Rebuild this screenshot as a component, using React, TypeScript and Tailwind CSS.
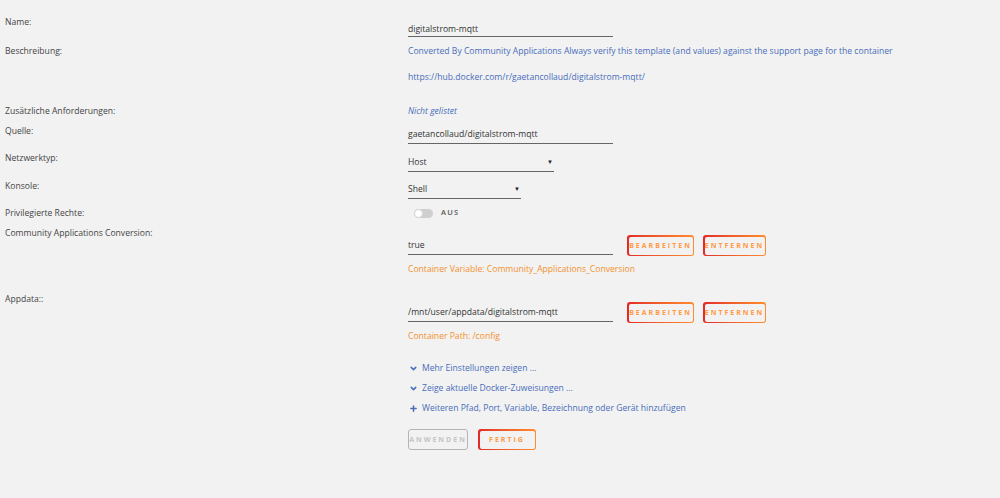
import { ChevronDown, Plus } from 'lucide-react';
import type { ReactNode } from 'react';

// Gradient-bordered action button
const ActionButton = ({ label, width, disabled }: { label: string; width: string; disabled?: boolean }) =>
  disabled ? (
    <div className={`${width} h-[21px] rounded-[3px] border-[1.5px] border-[#b5b5b5] flex items-center justify-center`}>
      <span className="text-[7px] font-bold tracking-[2px] text-[#c4c4c4] leading-none">{label}</span>
    </div>
  ) : (
    <div className={`${width} h-[21px] rounded-[3px] bg-gradient-to-r from-[#e22828] to-[#ff8c2f] p-[1.5px]`}>
      <div className="w-full h-full rounded-[2px] bg-[#f2f2f2] flex items-center justify-center">
        <span className="text-[7px] font-bold tracking-[2px] text-[#ff9a45] leading-none">{label}</span>
      </div>
    </div>
  );

const Field = ({ children, width }: { children: ReactNode; width: string }) => (
  <div className={`${width} leading-[12px] pb-[3px] border-b border-[#666] text-[#333] flex justify-between`}>
    {children}
  </div>
);

const Row = ({ label, height, children }: { label: string; height?: string; children?: ReactNode }) => (
  <div className={`flex ${height ?? ''}`}>
    <div className="w-[408px] pl-[5px] leading-[12px] text-[#444] shrink-0">{label}</div>
    <div className="flex-1">{children}</div>
  </div>
);

const Arrow = () => <span className="text-[6px] text-[#222] pr-[1px]">▼</span>;

export default function App() {
  return (
    <div className="min-h-screen bg-[#f2f2f2] text-[8.6px] pt-[16px]" style={{ fontFamily: '"Open Sans", sans-serif' }}>
      <Row label="Name:" height="h-[29px]">
        <div className="pt-[9px]">
          <Field width="w-[205px]">
            <span className="leading-[8px]">digitalstrom-mqtt</span>
          </Field>
        </div>
      </Row>

      <Row label="Beschreibung:" height="h-[60px]">
        <div className="leading-[12px] text-[#486dba]">
          Converted By Community Applications Always verify this template (and values) against the support page for the container
        </div>
        <div className="leading-[12px] text-[#486dba] mt-[14px]">https://hub.docker.com/r/gaetancollaud/digitalstrom-mqtt/</div>
      </Row>

      <Row label="Zusätzliche Anforderungen:" height="h-[20px]">
        <div className="leading-[12px] text-[#486dba] italic">Nicht gelistet</div>
      </Row>

      <Row label="Quelle:" height="h-[27px]">
        <div className="pt-[3px]">
          <Field width="w-[205px]">gaetancollaud/digitalstrom-mqtt</Field>
        </div>
      </Row>

      <Row label="Netzwerktyp:" height="h-[28px]">
        <div className="pt-[4px]">
          <Field width="w-[146px]">
            <span>Host</span>
            <Arrow />
          </Field>
        </div>
      </Row>

      <Row label="Konsole:" height="h-[27px]">
        <div className="pt-[3px]">
          <Field width="w-[113px]">
            <span>Shell</span>
            <Arrow />
          </Field>
        </div>
      </Row>

      <Row label="Privilegierte Rechte:" height="h-[20px]">
        <div className="flex items-center h-[12px] pl-[6px] gap-[8px]">
          <div className="relative w-[19px] h-[9px] rounded-full bg-[#cfcfcf]">
            <div className="absolute left-0 top-0 w-[9px] h-[9px] rounded-full bg-white border border-[#d6d6d6]" />
          </div>
          <span className="text-[7.5px] tracking-[1.2px] text-[#555] font-semibold">AUS</span>
        </div>
      </Row>

      <Row label="Community Applications Conversion:" height="h-[66px]">
        <div className="flex items-start">
          <div className="pt-[12px]">
            <Field width="w-[205px]">true</Field>
          </div>
          <div className="flex gap-[9px] ml-[14px] mt-[8px]">
            <ActionButton label="BEARBEITEN" width="w-[67px]" />
            <ActionButton label="ENTFERNEN" width="w-[63px]" />
          </div>
        </div>
        <div className="leading-[12px] text-[#f2912f] mt-[7px]">Container Variable: Community_Applications_Conversion</div>
      </Row>

      <Row label="Appdata::">
        <div className="flex items-start">
          <div className="pt-[13px]">
            <Field width="w-[205px]">/mnt/user/appdata/digitalstrom-mqtt</Field>
          </div>
          <div className="flex gap-[9px] ml-[14px] mt-[9px]">
            <ActionButton label="BEARBEITEN" width="w-[67px]" />
            <ActionButton label="ENTFERNEN" width="w-[63px]" />
          </div>
        </div>
        <div className="leading-[12px] text-[#f2912f] mt-[7px]">Container Path: /config</div>

        <div className="flex flex-col gap-[8px] mt-[20px] text-[#486dba]">
          <div className="flex items-center gap-[4px] leading-[12px] pl-[1px]">
            <ChevronDown size={9} strokeWidth={4} />
            <span>Mehr Einstellungen zeigen ...</span>
          </div>
          <div className="flex items-center gap-[4px] leading-[12px] pl-[1px]">
            <ChevronDown size={9} strokeWidth={4} />
            <span>Zeige aktuelle Docker-Zuweisungen ...</span>
          </div>
          <div className="flex items-center gap-[4px] leading-[12px] pl-[1px]">
            <Plus size={9} strokeWidth={4} />
            <span>Weiteren Pfad, Port, Variable, Bezeichnung oder Gerät hinzufügen</span>
          </div>
        </div>

        <div className="flex gap-[10px] mt-[15px]">
          <ActionButton label="ANWENDEN" width="w-[60px]" disabled />
          <ActionButton label="FERTIG" width="w-[58px]" />
        </div>
      </Row>
    </div>
  );
}
